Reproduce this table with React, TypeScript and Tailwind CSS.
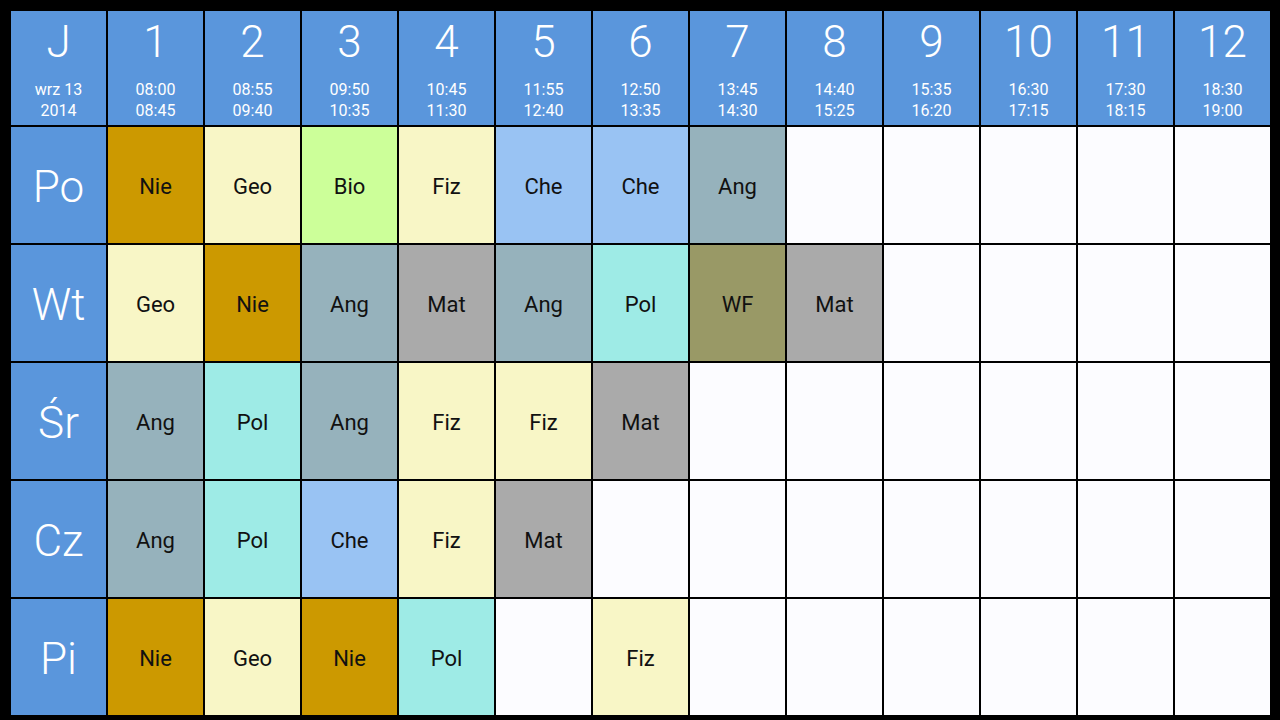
const periods = [
  { n: "1", a: "08:00", b: "08:45" },
  { n: "2", a: "08:55", b: "09:40" },
  { n: "3", a: "09:50", b: "10:35" },
  { n: "4", a: "10:45", b: "11:30" },
  { n: "5", a: "11:55", b: "12:40" },
  { n: "6", a: "12:50", b: "13:35" },
  { n: "7", a: "13:45", b: "14:30" },
  { n: "8", a: "14:40", b: "15:25" },
  { n: "9", a: "15:35", b: "16:20" },
  { n: "10", a: "16:30", b: "17:15" },
  { n: "11", a: "17:30", b: "18:15" },
  { n: "12", a: "18:30", b: "19:00" },
];

// subject -> cell colour
const colors: Record<string, string> = {
  Nie: "bg-[#cc9900]",
  Geo: "bg-[#f8f6c6]",
  Fiz: "bg-[#f8f6c6]",
  Bio: "bg-[#ccff99]",
  Che: "bg-[#99c3f3]",
  Ang: "bg-[#96b2bc]",
  Mat: "bg-[#aaaaaa]",
  Pol: "bg-[#9eebe6]",
  WF: "bg-[#999966]",
};

const days: { label: string; lessons: string[] }[] = [
  { label: "Po", lessons: ["Nie", "Geo", "Bio", "Fiz", "Che", "Che", "Ang"] },
  { label: "Wt", lessons: ["Geo", "Nie", "Ang", "Mat", "Ang", "Pol", "WF", "Mat"] },
  { label: "Śr", lessons: ["Ang", "Pol", "Ang", "Fiz", "Fiz", "Mat"] },
  { label: "Cz", lessons: ["Ang", "Pol", "Che", "Fiz", "Mat"] },
  { label: "Pi", lessons: ["Nie", "Geo", "Nie", "Pol", "", "Fiz"] },
];

const HeaderCell = ({ big, top, bottom }: { big: string; top: string; bottom: string }) => (
  <div className="bg-[#5a96dc] text-white flex flex-col items-center pt-[7px]">
    <div className="text-[44px] leading-[48px] font-light">{big}</div>
    <div className="mt-[13px] text-[16px] leading-[21px] text-center">
      <div>{top}</div>
      <div>{bottom}</div>
    </div>
  </div>
);

export default function App() {
  return (
    <div
      className="w-[1280px] h-[720px] bg-black pt-[11px] pl-[11px] overflow-hidden"
      style={{ fontFamily: "Roboto, 'Noto Sans', sans-serif" }}
    >
      <div className="grid grid-cols-[repeat(13,95px)] grid-rows-[114px_repeat(5,116px)] gap-[2px]">
        <HeaderCell big="J" top="wrz 13" bottom="2014" />
        {periods.map((p) => (
          <HeaderCell key={p.n} big={p.n} top={p.a} bottom={p.b} />
        ))}

        {days.map((day) => (
          <>
            <div
              key={day.label}
              className="bg-[#5a96dc] text-white flex items-center justify-center text-[44px] font-light pt-[3px]"
            >
              {day.label}
            </div>
            {periods.map((_, i) => {
              const subj = day.lessons[i] || "";
              return (
                <div
                  key={day.label + i}
                  className={`flex items-center justify-center pt-[2px] text-[22px] text-[#111111] ${
                    subj ? colors[subj] : "bg-[#fcfcff]"
                  }`}
                >
                  {subj}
                </div>
              );
            })}
          </>
        ))}
      </div>
    </div>
  );
}
